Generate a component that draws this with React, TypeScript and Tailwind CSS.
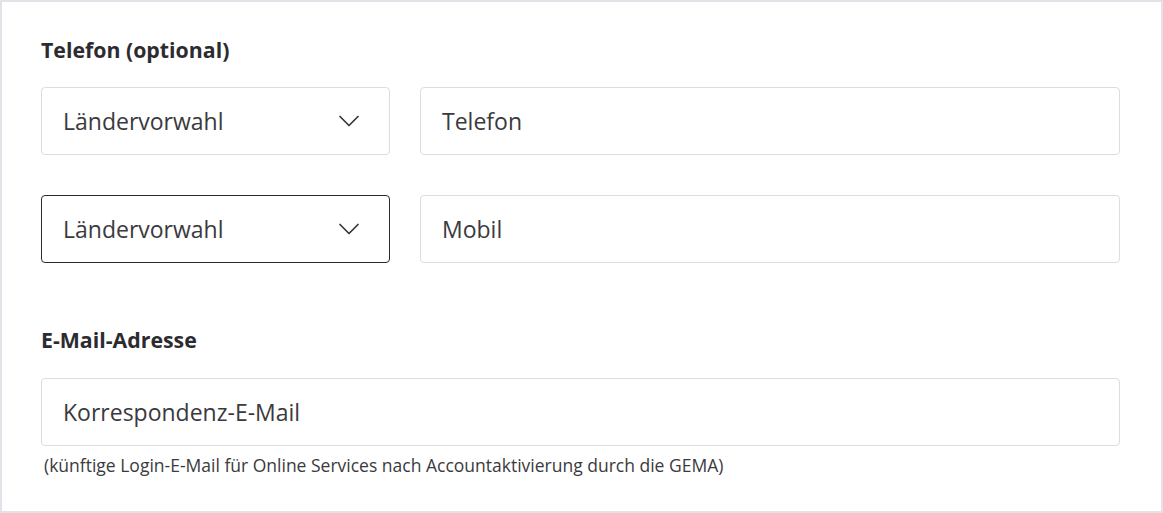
import { ChevronDown } from "lucide-react";

function SelectBox({ focused }: { focused?: boolean }) {
  return (
    <div
      className={`flex h-[68px] w-[349px] shrink-0 items-center justify-between rounded-[4px] bg-white pl-[21px] pr-[22px] ${
        focused ? "border-[1.5px] border-[#2b2b2e]" : "border border-[#dcdce2]"
      }`}
    >
      <span className="text-[23px] leading-[30px] text-[#3a3a3e]">Ländervorwahl</span>
      <ChevronDown className="h-[36px] w-[36px] text-[#333338]" strokeWidth={1.1} />
    </div>
  );
}

function TextBox({ placeholder }: { placeholder: string }) {
  return (
    <div className="flex h-[68px] flex-1 items-center rounded-[4px] border border-[#dcdce2] bg-white px-[21px]">
      <span className="text-[23px] leading-[30px] text-[#3a3a3e]">{placeholder}</span>
    </div>
  );
}

export default function App() {
  return (
    <div
      className="h-[513px] w-[1163px] border-2 border-[#e2e2e8] bg-white pl-[39px] pr-[41px] pt-[34px]"
      style={{ fontFamily: '"Open Sans", "Noto Sans", sans-serif' }}
    >
      <h2 className="text-[21.3px] font-bold leading-[28px] text-[#2c2c30]">
        Telefon (optional)
      </h2>

      <div className="mt-[23px] flex gap-[30px]">
        <SelectBox />
        <TextBox placeholder="Telefon" />
      </div>

      <div className="mt-[40px] flex gap-[30px]">
        <SelectBox focused />
        <TextBox placeholder="Mobil" />
      </div>

      <h2 className="mt-[63px] text-[21.3px] font-bold leading-[28px] text-[#2c2c30]">
        E-Mail-Adresse
      </h2>

      <div className="mt-[24px] flex">
        <TextBox placeholder="Korrespondenz-E-Mail" />
      </div>

      <p className="mt-[9px] pl-[3px] text-[17.5px] leading-[20px] text-[#3a3a3e]">
        (künftige Login-E-Mail für Online Services nach Accountaktivierung durch die GEMA)
      </p>
    </div>
  );
}
